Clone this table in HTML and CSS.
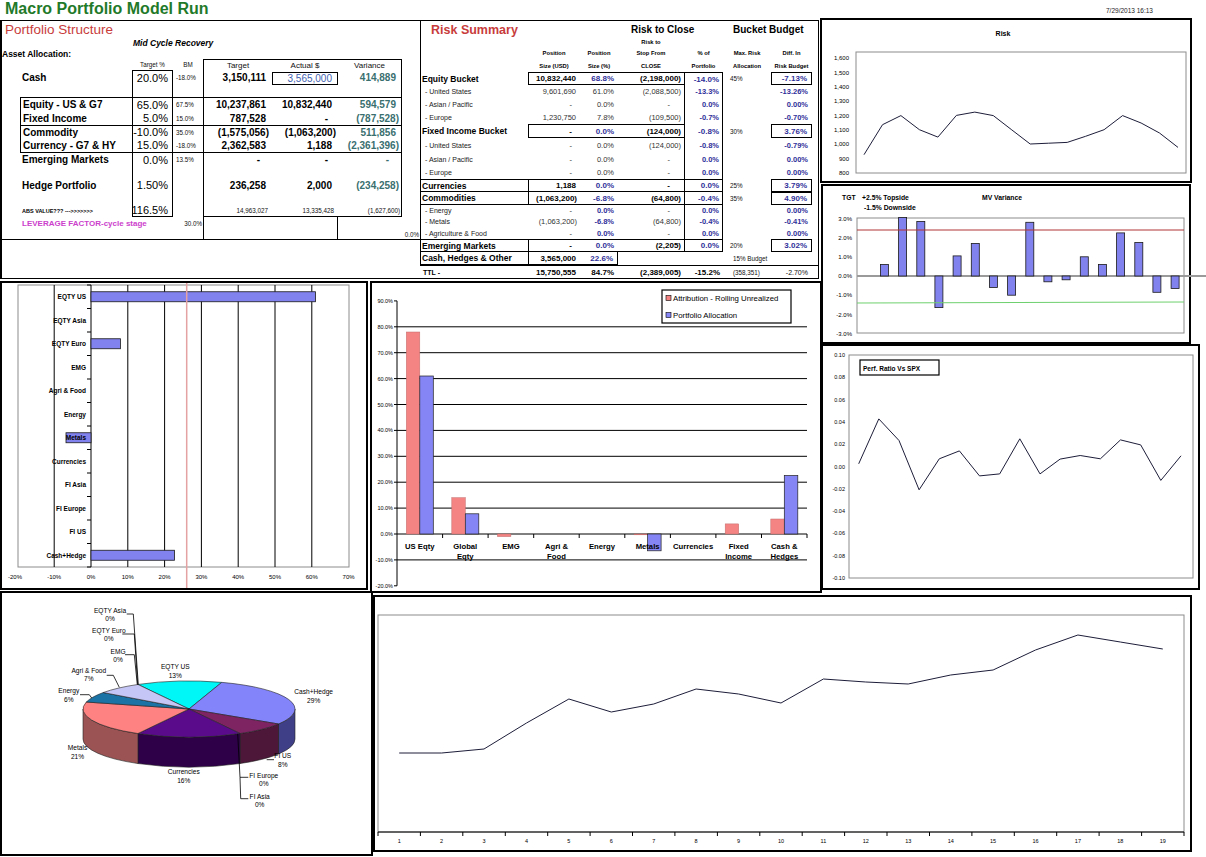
FILE: index.html
```html
<!DOCTYPE html>
<html>
<head>
<meta charset="utf-8">
<title>Macro Portfolio Model Run</title>
<link rel="stylesheet" href="styles.css">
</head>
<body>
<div class="page">
  <div class="header">
    <div class="title">Macro Portfolio Model Run</div>
    <div class="date">7/29/2013 16:13</div>
  </div>

  <div class="tables">
    <!-- Portfolio Structure -->
    <div class="ps">
      <div class="row h17"><div class="all ps-title">Portfolio Structure</div></div>
      <div class="row h10"><div></div><div></div><div class="span5 mid">Mid Cycle Recovery</div></div>
      <div class="row h11"><div class="all aa">Asset Allocation:</div></div>
      <div class="row h11">
        <div></div><div></div>
        <div class="c fx">Target %</div>
        <div class="c fx">BM</div>
        <div class="c hd bt bl">Target</div>
        <div class="c hd bt">Actual $</div>
        <div class="c hd bt br">Variance</div>
        <div></div>
      </div>
      <div class="row h14">
        <div></div>
        <div class="lab">Cash</div>
        <div class="r pct bt bl br pr4">20.0%</div>
        <div class="fx pl3">-18.0%</div>
        <div class="r num bl pr6">3,150,111</div>
        <div class="r cashbox pr5">3,565,000</div>
        <div class="r var br pr5">414,889</div>
        <div></div>
      </div>
      <div class="row h13">
        <div></div><div></div><div class="bl br"></div><div></div><div class="bl"></div><div></div><div class="br"></div><div></div>
      </div>
      <div class="row h14">
        <div></div>
        <div class="lab bt bl">Equity - US &amp; G7</div>
        <div class="r pct bt bl br pr4">65.0%</div>
        <div class="fx pl3 bt">67.5%</div>
        <div class="r num bt bl pr6">10,237,861</div>
        <div class="r num bt pr6">10,832,440</div>
        <div class="r var bt br pr5">594,579</div>
        <div></div>
      </div>
      <div class="row h14">
        <div></div>
        <div class="lab bl">Fixed Income</div>
        <div class="r pct bl br pr4">5.0%</div>
        <div class="fx pl3">15.0%</div>
        <div class="r num bl pr6">787,528</div>
        <div class="r num pr10">-</div>
        <div class="r var br pr2">(787,528)</div>
        <div></div>
      </div>
      <div class="row h13">
        <div></div>
        <div class="lab bt bl">Commodity</div>
        <div class="r pct bt bl br pr4">-10.0%</div>
        <div class="fx pl3 bt">35.0%</div>
        <div class="r num bt bl pr3">(1,575,056)</div>
        <div class="r num bt pr2">(1,063,200)</div>
        <div class="r var bt br pr5">511,856</div>
        <div></div>
      </div>
      <div class="row h15">
        <div></div>
        <div class="lab bb bl">Currency - G7 &amp; HY</div>
        <div class="r pct bb bl br pr4">15.0%</div>
        <div class="fx pl3 bb">-18.0%</div>
        <div class="r num bb bl pr6">2,362,583</div>
        <div class="r num bb pr6">1,188</div>
        <div class="r var bb br pr2">(2,361,396)</div>
        <div></div>
      </div>
      <div class="row h13">
        <div></div>
        <div class="lab">Emerging Markets</div>
        <div class="r pct bl br pr4">0.0%</div>
        <div class="fx pl3">13.5%</div>
        <div class="r num bl pr12">-</div>
        <div class="r num pr10">-</div>
        <div class="r var br pr12">-</div>
        <div></div>
      </div>
      <div class="row h12">
        <div></div><div></div><div class="bl br"></div><div></div><div class="bl"></div><div></div><div class="br"></div><div></div>
      </div>
      <div class="row h14">
        <div></div>
        <div class="lab">Hedge Portfolio</div>
        <div class="r pct bl br pr4">1.50%</div>
        <div></div>
        <div class="r num bl pr6">236,258</div>
        <div class="r num pr6">2,000</div>
        <div class="r var br pr2">(234,258)</div>
        <div></div>
      </div>
      <div class="row h12">
        <div></div><div></div><div class="bl br"></div><div></div><div class="bl"></div><div></div><div class="br"></div><div></div>
      </div>
      <div class="row h13">
        <div></div>
        <div class="fxb pl2">ABS VALUE??? ---&gt;&gt;&gt;&gt;&gt;&gt;&gt;</div>
        <div class="r pct bl br bb pr4">116.5%</div>
        <div></div>
        <div class="r fx bl bb pr4">14,963,027</div>
        <div class="r fx bb pr4">13,335,428</div>
        <div class="r fx br bb pr1">(1,627,600)</div>
        <div></div>
      </div>
      <div class="row h12">
        <div></div>
        <div class="span2 lev">LEVERAGE FACTOR-cycle stage</div>
        <div class="r fx pr1">30.0%</div>
        <div class="bl"></div>
        <div class="br"></div>
        <div></div>
        <div></div>
      </div>
      <div class="row h10">
        <div></div><div></div><div></div><div></div><div class="bl"></div><div class="br"></div><div></div>
        <div class="r fx pr1">0.0%</div>
      </div>
      <div class="row h40"><div class="all bt bb"></div></div>
    </div>

    <!-- Risk Summary -->
    <div class="rs">
      <div class="row h17 lb">
        <div class="rs-title">Risk Summary</div><div></div><div></div>
        <div class="span2 rtc">Risk to Close</div>
        <div class="span2 bbud">Bucket Budget</div>
        <div></div>
      </div>
      <div class="row h8 lb">
        <div></div><div></div><div></div><div class="c fh">Risk to</div><div></div><div></div><div></div><div></div>
      </div>
      <div class="row h13 lb">
        <div></div>
        <div class="c fh">Position</div>
        <div class="c fh">Position</div>
        <div class="c fh">Stop From</div>
        <div class="c fh">% of</div>
        <div class="c fh">Max. Risk</div>
        <div class="c fh">Diff. In</div>
        <div></div>
      </div>
      <div class="row h13 lb">
        <div></div>
        <div class="c fh">Size (USD)</div>
        <div class="c fh">Size (%)</div>
        <div class="c fh">CLOSE</div>
        <div class="c fh">Portfolio</div>
        <div class="c fh">Allocation</div>
        <div class="c fh">Risk Budget</div>
        <div></div>
      </div>
      <!-- Equity Bucket -->
      <div class="row h13 lb">
        <div class="fb pl2">Equity Bucket</div>
        <div class="r fn bt bb bl pr4">10,832,440</div>
        <div class="r fbb bt bb pr4">68.8%</div>
        <div class="r fn bt bb pr3">(2,198,000)</div>
        <div class="r fbb bt bl br pr3">-14.0%</div>
        <div class="fx pl7">45%</div>
        <div class="r fbb box pr4">-7.13%</div>
        <div></div>
      </div>
      <div class="row h13 lb">
        <div class="fs pl5">- United States</div>
        <div class="r fg pr4">9,601,690</div>
        <div class="r fg pr4">61.0%</div>
        <div class="r fg pr3">(2,088,500)</div>
        <div class="r fsb bl br pr3">-13.3%</div>
        <div></div>
        <div class="r fsb pr4">-13.26%</div>
        <div></div>
      </div>
      <div class="row h13 lb">
        <div class="fs pl5">- Asian / Pacific</div>
        <div class="r fg pr8">-</div>
        <div class="r fg pr4">0.0%</div>
        <div class="r fg pr14">-</div>
        <div class="r fsb bl br pr3">0.0%</div>
        <div></div>
        <div class="r fsb pr4">0.00%</div>
        <div></div>
      </div>
      <div class="row h13 lb">
        <div class="fs pl5">- Europe</div>
        <div class="r fg pr4">1,230,750</div>
        <div class="r fg pr4">7.8%</div>
        <div class="r fg pr3">(109,500)</div>
        <div class="r fsb bl br pr3">-0.7%</div>
        <div></div>
        <div class="r fsb pr4">-0.70%</div>
        <div></div>
      </div>
      <!-- Fixed Income Bucket -->
      <div class="row h14 lb">
        <div class="fb pl2">Fixed Income Bucket</div>
        <div class="r fn bt bb bl pr8">-</div>
        <div class="r fbb bt bb pr4">0.0%</div>
        <div class="r fn bt bb pr3">(124,000)</div>
        <div class="r fbb bl br pr3">-0.8%</div>
        <div class="fx pl7">30%</div>
        <div class="r fbb box pr4">3.76%</div>
        <div></div>
      </div>
      <div class="row h15 lb">
        <div class="fs pl5">- United States</div>
        <div class="r fg pr8">-</div>
        <div class="r fg pr4">0.0%</div>
        <div class="r fg pr3">(124,000)</div>
        <div class="r fsb bl br pr3">-0.8%</div>
        <div></div>
        <div class="r fsb pr4">-0.79%</div>
        <div></div>
      </div>
      <div class="row h13 lb">
        <div class="fs pl5">- Asian / Pacific</div>
        <div class="r fg pr8">-</div>
        <div class="r fg pr4">0.0%</div>
        <div class="r fg pr14">-</div>
        <div class="r fsb bl br pr3">0.0%</div>
        <div></div>
        <div class="r fsb pr4">0.00%</div>
        <div></div>
      </div>
      <div class="row h13 lb">
        <div class="fs pl5">- Europe</div>
        <div class="r fg pr8">-</div>
        <div class="r fg pr4">0.0%</div>
        <div class="r fg pr14">-</div>
        <div class="r fsb bl br pr3">0.0%</div>
        <div></div>
        <div class="r fsb pr4">0.00%</div>
        <div></div>
      </div>
      <!-- Currencies -->
      <div class="row h13 lb">
        <div class="fb pl2 bt bb">Currencies</div>
        <div class="r fn bt bb bl pr4">1,188</div>
        <div class="r fbb bt bb pr4">0.0%</div>
        <div class="r fn bt bb pr14">-</div>
        <div class="r fbb bt bb bl br pr3">0.0%</div>
        <div class="fx pl7">25%</div>
        <div class="r fbb box pr4">3.79%</div>
        <div></div>
      </div>
      <div class="row h13 lb">
        <div class="fb pl2 bb">Commodities</div>
        <div class="r fn bb bl pr3">(1,063,200)</div>
        <div class="r fbb bb pr4">-6.8%</div>
        <div class="r fn bb pr3">(64,800)</div>
        <div class="r fbb bb bl br pr3">-0.4%</div>
        <div class="fx pl7">35%</div>
        <div class="r fbb box pr4">4.90%</div>
        <div></div>
      </div>
      <div class="row h11 lb">
        <div class="fs pl5">- Energy</div>
        <div class="r fg pr8">-</div>
        <div class="r fsb pr4">0.0%</div>
        <div class="r fg pr14">-</div>
        <div class="r fsb bl br pr3">0.0%</div>
        <div></div>
        <div class="r fsb pr4">0.00%</div>
        <div></div>
      </div>
      <div class="row h11 lb">
        <div class="fs pl5">- Metals</div>
        <div class="r fg pr3">(1,063,200)</div>
        <div class="r fsb pr4">-6.8%</div>
        <div class="r fg pr3">(64,800)</div>
        <div class="r fsb bl br pr3">-0.4%</div>
        <div></div>
        <div class="r fsb pr4">-0.41%</div>
        <div></div>
      </div>
      <div class="row h12 lb">
        <div class="fs pl5">- Agriculture &amp; Food</div>
        <div class="r fg pr8">-</div>
        <div class="r fsb pr4">0.0%</div>
        <div class="r fg pr14">-</div>
        <div class="r fsb bl br pr3">0.0%</div>
        <div></div>
        <div class="r fsb pr4">0.00%</div>
        <div></div>
      </div>
      <!-- Emerging Markets -->
      <div class="row h13 lb">
        <div class="fb pl2 bt bb">Emerging Markets</div>
        <div class="r fn bt bb bl pr8">-</div>
        <div class="r fbb bt bb pr4">0.0%</div>
        <div class="r fn bt bb pr3">(2,205)</div>
        <div class="r fbb bt bb bl br pr3">0.0%</div>
        <div class="fx pl7">20%</div>
        <div class="r fbb box pr4">3.02%</div>
        <div></div>
      </div>
      <div class="row h13 lb">
        <div class="fb pl2 bb">Cash, Hedges &amp; Other</div>
        <div class="r fn bb bl pr4">3,565,000</div>
        <div class="r fbb bb br pr4">22.6%</div>
        <div></div>
        <div></div>
        <div class="span2 fx pl10">15% Budget</div>
        <div></div>
      </div>
      <div class="row h14 ttl">
        <div class="fttl pl3">TTL -</div>
        <div class="r fn pr4">15,750,555</div>
        <div class="r fn pr4">84.7%</div>
        <div class="r fn pr3">(2,389,005)</div>
        <div class="r fn pr3">-15.2%</div>
        <div class="fx pl10">(358,351)</div>
        <div class="r fx7 pr4">-2.70%</div>
        <div></div>
      </div>
    </div>
  </div>

  <!-- Risk line chart -->
  <div class="panel p-risk">
    <svg width="368" height="161" viewBox="2 2 368 161">
      <text x="183" y="17.5" class="s7 tb" text-anchor="middle">Risk</text>
      <rect x="36" y="34" width="330" height="121" class="pa"/>
      <g class="s6" text-anchor="end">
        <text x="29" y="42.2">1,600</text>
        <text x="29" y="56.6">1,500</text>
        <text x="29" y="70.9">1,400</text>
        <text x="29" y="85.3">1,300</text>
        <text x="29" y="99.7">1,200</text>
        <text x="29" y="114.1">1,100</text>
        <text x="29" y="128.4">1,000</text>
        <text x="29" y="142.8">900</text>
        <text x="29" y="157.2">800</text>
      </g>
      <polyline class="ln" points="44,136.7 62.5,106.7 80.9,97.6 99.4,111.7 117.9,119.1 136.4,97.4 154.8,94.1 173.3,97.6 191.8,111.9 210.2,126 228.7,125.2 247.2,124.4 265.6,118.3 284.1,111.7 302.6,97.6 321.1,105 339.5,115 358,129.4"/>
    </svg>
  </div>

  <!-- MV Variance -->
  <div class="panel p-mv">
    <svg width="366" height="156" viewBox="2 2 366 156">
      <g class="s68 tb">
        <text x="21" y="15.5">TGT</text>
        <text x="41" y="15.5">+2.5% Topside</text>
        <text x="43" y="25.5">-1.5% Downside</text>
        <text x="161" y="15.5">MV Variance</text>
      </g>
      <rect x="36" y="34" width="327" height="115" class="pa"/>
      <g class="s6" text-anchor="end">
        <text x="31" y="36.7">3.0%</text>
        <text x="31" y="55.9">2.0%</text>
        <text x="31" y="75">1.0%</text>
        <text x="31" y="94.2">0.0%</text>
        <text x="31" y="113.4">-1.0%</text>
        <text x="31" y="132.5">-2.0%</text>
        <text x="31" y="151.7">-3.0%</text>
      </g>
      <line x1="36" y1="92" x2="387" y2="92" class="zero"/>
      <g class="bar">
        <rect x="59.4" y="80.5" width="8" height="11.5"/>
        <rect x="77.6" y="33.5" width="8" height="58.5"/>
        <rect x="95.8" y="37.4" width="8" height="54.6"/>
        <rect x="113.9" y="92" width="8" height="31.6"/>
        <rect x="132.1" y="71.9" width="8" height="20.1"/>
        <rect x="150.3" y="59.4" width="8" height="32.6"/>
        <rect x="168.4" y="92" width="8" height="11.5"/>
        <rect x="186.6" y="92" width="8" height="19.2"/>
        <rect x="204.8" y="38.3" width="8" height="53.7"/>
        <rect x="222.9" y="92" width="8" height="5.8"/>
        <rect x="241.1" y="92" width="8" height="3.8"/>
        <rect x="259.3" y="72.8" width="8" height="19.2"/>
        <rect x="277.4" y="80.5" width="8" height="11.5"/>
        <rect x="295.6" y="48.9" width="8" height="43.1"/>
        <rect x="313.8" y="58.5" width="8" height="33.5"/>
        <rect x="331.9" y="92" width="8" height="16.3"/>
        <rect x="350.1" y="92" width="8" height="12.5"/>
      </g>
      <line x1="36" y1="46" x2="363" y2="46" class="redl"/>
      <line x1="36" y1="119" x2="363" y2="118" class="grnl"/>
    </svg>
  </div>

  <!-- Perf Ratio -->
  <div class="panel p-perf">
    <svg width="375" height="242" viewBox="2 2 375 242">
      <rect x="28" y="11" width="344" height="223" class="pa"/>
      <g class="s55" text-anchor="end">
        <text x="24" y="13">0.10</text>
        <text x="24" y="35.3">0.08</text>
        <text x="24" y="57.6">0.06</text>
        <text x="24" y="79.9">0.04</text>
        <text x="24" y="102.2">0.02</text>
        <text x="24" y="124.5">0.00</text>
        <text x="24" y="146.8">-0.02</text>
        <text x="24" y="169.1">-0.04</text>
        <text x="24" y="191.4">-0.06</text>
        <text x="24" y="213.7">-0.08</text>
        <text x="24" y="236">-0.10</text>
      </g>
      <rect x="39" y="16" width="79" height="15" class="lgbox"/>
      <text x="42" y="26.5" class="s65 tb">Perf. Ratio Vs SPX</text>
      <polyline class="ln" points="37.7,119.8 57.8,74.9 78,96.5 98.1,145.8 118.3,114.8 138.4,106.9 158.5,131.9 178.7,129.9 198.8,94.8 219,129.9 239.1,115.1 259.2,111.5 279.4,114.8 299.5,95.9 319.7,100.9 339.8,136.4 360,111.8"/>
    </svg>
  </div>

  <!-- Horizontal bar chart -->
  <div class="panel p-hbar">
    <svg width="364" height="305" viewBox="2 2 364 305">
      <rect x="18" y="4" width="331" height="282" class="pa"/>
      <path class="gl" d="M54.2 4V286M91 4V286M127.8 4V286M164.6 4V286M201.4 4V286M238.2 4V286M275 4V286M311.8 4V286"/>
      <path class="gl" d="M87 4h4M87 27.5h4M87 51h4M87 74.5h4M87 98h4M87 121.5h4M87 145h4M87 168.5h4M87 192h4M87 215.5h4M87 239h4M87 262.5h4M87 286h4"/>
      <g class="bar">
        <rect x="91" y="10.75" width="224.5" height="10"/>
        <rect x="91" y="57.75" width="29.4" height="10"/>
        <rect x="66" y="151.75" width="25" height="10"/>
        <rect x="91" y="269.25" width="83.5" height="10"/>
      </g>
      <g class="s65 tb" text-anchor="end">
        <text x="86" y="18">EQTY US</text>
        <text x="86" y="41.5">EQTY Asia</text>
        <text x="86" y="65">EQTY Euro</text>
        <text x="86" y="88.5">EMG</text>
        <text x="86" y="112">Agri &amp; Food</text>
        <text x="86" y="135.5">Energy</text>
        <text x="86" y="159">Metals</text>
        <text x="86" y="182.5">Currencies</text>
        <text x="86" y="206">FI Asia</text>
        <text x="86" y="229.5">FI Europe</text>
        <text x="86" y="253">FI US</text>
        <text x="86" y="276.5">Cash+Hedge</text>
      </g>
      <line x1="186.7" y1="2" x2="186.7" y2="307" class="pink"/>
      <g class="s6" text-anchor="middle">
        <text x="15" y="298">-20%</text>
        <text x="54.2" y="298">-10%</text>
        <text x="91" y="298">0%</text>
        <text x="127.8" y="298">10%</text>
        <text x="164.6" y="298">20%</text>
        <text x="201.4" y="298">30%</text>
        <text x="238.2" y="298">40%</text>
        <text x="275" y="298">50%</text>
        <text x="311.8" y="298">60%</text>
        <text x="348.6" y="298">70%</text>
      </g>
    </svg>
  </div>

  <!-- Column chart -->
  <div class="panel p-col">
    <svg width="448" height="308" viewBox="2 2 448 308">
      <path class="gl" d="M27 45.8H437M27 71.7H437M27 97.6H437M27 123.5H437M27 149.4H437M27 175.3H437M27 201.2H437M27 227.1H437M27 253H437M27 278.9H437"/>
      <path class="gl" d="M27 19.9V304.8M24 19.9h3M24 45.8h3M24 71.7h3M24 97.6h3M24 123.5h3M24 149.4h3M24 175.3h3M24 201.2h3M24 227.1h3M24 253h3M24 278.9h3M24 304.8h3"/>
      <path class="gl" d="M72.6 253v4M118.1 253v4M163.7 253v4M209.2 253v4M254.8 253v4M300.4 253v4M345.9 253v4M391.5 253v4M437 253v4"/>
      <g class="s55" text-anchor="end">
        <text x="23" y="21.9">90.0%</text>
        <text x="23" y="47.8">80.0%</text>
        <text x="23" y="73.7">70.0%</text>
        <text x="23" y="99.6">60.0%</text>
        <text x="23" y="125.5">50.0%</text>
        <text x="23" y="151.4">40.0%</text>
        <text x="23" y="177.3">30.0%</text>
        <text x="23" y="203.2">20.0%</text>
        <text x="23" y="229.1">10.0%</text>
        <text x="23" y="255">0.0%</text>
        <text x="23" y="280.9">-10.0%</text>
        <text x="23" y="306.8">-20.0%</text>
      </g>
      <g class="rbar">
        <rect x="36.3" y="51" width="13.5" height="202"/>
        <rect x="81.8" y="216.7" width="13.5" height="36.3"/>
        <rect x="127.4" y="253" width="13.5" height="2.6"/>
        <rect x="264.1" y="253" width="13.5" height="0.8"/>
        <rect x="355.2" y="242.9" width="13.5" height="10.1"/>
        <rect x="400.8" y="238" width="13.5" height="15"/>
      </g>
      <g class="bbar">
        <rect x="49.8" y="95" width="13.5" height="158"/>
        <rect x="95.3" y="232.8" width="13.5" height="20.2"/>
        <rect x="277.6" y="253" width="13.5" height="16.8"/>
        <rect x="414.3" y="194.5" width="13.5" height="58.5"/>
      </g>
      <g class="s77 tb" text-anchor="middle">
        <text x="49.8" y="267.7">US Eqty</text>
        <text x="95.3" y="267.7">Global</text>
        <text x="95.3" y="277.7">Eqty</text>
        <text x="140.9" y="267.7">EMG</text>
        <text x="186.5" y="267.7">Agri &amp;</text>
        <text x="186.5" y="277.7">Food</text>
        <text x="232" y="267.7">Energy</text>
        <text x="277.6" y="267.7">Metals</text>
        <text x="323.1" y="267.7">Currencies</text>
        <text x="368.7" y="267.7">Fixed</text>
        <text x="368.7" y="277.7">Income</text>
        <text x="414.3" y="267.7">Cash &amp;</text>
        <text x="414.3" y="277.7">Hedges</text>
      </g>
      <rect x="292" y="9" width="129" height="33" class="lgbox"/>
      <rect x="296" y="14.5" width="5" height="5" class="rsq"/>
      <text x="303" y="20" class="s78">Attribution - Rolling Unrealized</text>
      <rect x="296" y="31.5" width="5" height="5" class="bsq"/>
      <text x="303" y="37" class="s78">Portfolio Allocation</text>
    </svg>
  </div>

  <!-- 3D Pie -->
  <div class="panel p-pie">
    <svg width="369" height="261" viewBox="2 2 369 261">
      <g class="pe">
        <path fill="#3f3f88" d="M295 118A106 28 0 0 1 278.5 133L278.5 163A106 28 0 0 0 295 148Z"/>
        <path fill="#4c1738" d="M278.5 133A106 28 0 0 1 240.07 142.54L240.07 172.54A106 28 0 0 0 278.5 163Z"/>
        <path fill="#2d0048" d="M240.07 142.54A106 28 0 0 1 137.93 142.54L137.93 172.54A106 28 0 0 0 240.07 172.54Z"/>
        <path fill="#9b5353" d="M137.93 142.54A106 28 0 0 1 83 118L83 148A106 28 0 0 0 137.93 172.54Z"/>
        <path fill="#00f7f7" d="M189 118L137.93 93.46A106 28 0 0 1 221.76 91.37Z"/>
        <path fill="#8484fa" d="M189 118L221.76 91.37A106 28 0 0 1 278.5 133Z"/>
        <path fill="#7e2463" d="M189 118L278.5 133A106 28 0 0 1 240.07 142.54Z"/>
        <path fill="#5a0b8c" d="M189 118L240.07 142.54A106 28 0 0 1 137.93 142.54Z"/>
        <path fill="#ff8282" d="M189 118L137.93 142.54A106 28 0 0 1 86.33 111.04Z"/>
        <path fill="#1b72a5" d="M189 118L86.33 111.04A106 28 0 0 1 103.24 101.54Z"/>
        <path fill="#c6c6f6" d="M189 118L103.24 101.54A106 28 0 0 1 137.93 93.46Z"/>
      </g>
      <path class="lead" d="M126.7 23H133.3L138.3 93.7M122.3 43H134.3L137.7 93.7M125 63.7H134.3L137.3 93.7M106.7 84.3H113.3L119.3 96.3M80 103.7H89.3L91.7 107M266.7 168.7H274M237.7 142.7L240 186.3H248.3M240 186.3L240.7 207.7H248.3"/>
      <g class="s66" text-anchor="middle">
        <text x="110" y="21.9">EQTY Asia</text><text x="110" y="29.9">0%</text>
        <text x="108.8" y="41.9">EQTY Euro</text><text x="108.8" y="49.9">0%</text>
        <text x="118" y="62.5">EMG</text><text x="118" y="70.5">0%</text>
        <text x="88.8" y="81.9">Agri &amp; Food</text><text x="88.8" y="90.2">7%</text>
        <text x="68.8" y="101.9">Energy</text><text x="68.8" y="110.9">6%</text>
        <text x="175.3" y="78.2">EQTY US</text><text x="175.3" y="86.5">13%</text>
        <text x="313.7" y="102.9">Cash+Hedge</text><text x="313.7" y="111.5">29%</text>
        <text x="77.5" y="159.2">Metals</text><text x="77.5" y="167.5">21%</text>
        <text x="183.8" y="182.5">Currencies</text><text x="183.8" y="191.5">16%</text>
        <text x="282.8" y="166.9">FI US</text><text x="282.8" y="175.9">8%</text>
        <text x="263.8" y="186.9">FI Europe</text><text x="263.8" y="195.2">0%</text>
        <text x="259.7" y="207.5">FI Asia</text><text x="259.7" y="215.9">0%</text>
      </g>
    </svg>
  </div>

  <!-- Bottom line chart -->
  <div class="panel p-line">
    <svg width="815" height="253" viewBox="2 2 815 253">
      <rect x="5" y="20" width="806" height="217" class="pa"/>
      <path class="gl" d="M5 237H811M5 237v4M47.4 237v4M89.8 237v4M132.3 237v4M174.7 237v4M217.1 237v4M259.5 237v4M301.9 237v4M344.4 237v4M386.8 237v4M429.2 237v4M471.6 237v4M514 237v4M556.5 237v4M598.9 237v4M641.3 237v4M683.7 237v4M726.1 237v4M768.6 237v4M811 237v4"/>
      <g class="s55" text-anchor="middle">
        <text x="26.2" y="247.5">1</text>
        <text x="68.6" y="247.5">2</text>
        <text x="111" y="247.5">3</text>
        <text x="153.5" y="247.5">4</text>
        <text x="195.9" y="247.5">5</text>
        <text x="238.3" y="247.5">6</text>
        <text x="280.7" y="247.5">7</text>
        <text x="323.1" y="247.5">8</text>
        <text x="365.6" y="247.5">9</text>
        <text x="408" y="247.5">10</text>
        <text x="450.4" y="247.5">11</text>
        <text x="492.8" y="247.5">12</text>
        <text x="535.2" y="247.5">13</text>
        <text x="577.7" y="247.5">14</text>
        <text x="620.1" y="247.5">15</text>
        <text x="662.5" y="247.5">16</text>
        <text x="704.9" y="247.5">17</text>
        <text x="747.3" y="247.5">18</text>
        <text x="789.8" y="247.5">19</text>
      </g>
      <polyline class="ln" points="26.2,158 68.6,158 111,154 153.5,128 195.9,104 238.3,117 280.7,109 323.1,94 365.6,99 408,108 450.4,84 492.8,87 535.2,89 577.7,80 620.1,75 662.5,55 704.9,40 747.3,47 789.8,54"/>
    </svg>
  </div>
</div>
</body>
</html>
```
FILE: styles.css
```css
* { box-sizing: border-box; }
body {
  margin: 0;
  background: #fff;
  color: #000;
  font-family: "Liberation Sans", Arial, sans-serif;
}
.page {
  display: grid;
  grid-template-columns: 370px 450px 386px;
  grid-template-rows: 18px 165px 96px 65px 247px 266px;
  width: 1206px;
  height: 857px;
  overflow: hidden;
}
.header {
  grid-column: 1 / 4;
  grid-row: 1;
  display: flex;
  justify-content: space-between;
  align-items: flex-start;
}
.title {
  font-size: 16px;
  font-weight: bold;
  color: #1f7a2a;
  line-height: 18px;
  padding-left: 5px;
}
.date {
  font-size: 6.5px;
  color: #222;
  padding: 7px 53px 0 0;
}

/* ---------- tables ---------- */
.tables {
  grid-column: 1 / 3;
  grid-row: 2 / 4;
  display: flex;
  align-items: flex-start;
  margin-top: 2px;
}
.ps {
  width: 420px;
  border-left: 2px solid #000;
  border-top: 1px solid #000;
}
.rs {
  width: 399px;
  border-top: 1px solid #000;
  border-right: 1px solid #000;
}
.row { display: grid; }
.ps .row { grid-template-columns: 18px 112px 41px 30px 69px 66px 64px 18px; }
.rs .row { grid-template-columns: 108px 52px 38px 66px 39px 48px 41px 6px; }
.row > div {
  display: flex;
  align-items: center;
  white-space: nowrap;
  min-width: 0;
}
.rs .row.lb { box-shadow: inset 1px 0 0 #000; }
.rs .row.ttl { box-shadow: inset 0 1px 0 #000, inset 0 -1px 0 #000; }

.h8 { height: 8px; } .h10 { height: 10px; } .h11 { height: 11px; }
.h12 { height: 12px; } .h13 { height: 13px; } .h14 { height: 14px; }
.h15 { height: 15px; } .h17 { height: 17px; } .h40 { height: 40px; }

.all { grid-column: 1 / -1; }
.span2 { grid-column: span 2; }
.span5 { grid-column: span 5; }

.r { justify-content: flex-end; }
.c { justify-content: center; }

.bt { border-top: 1px solid #000; }
.bb { border-bottom: 1px solid #000; }
.bl { border-left: 1px solid #000; }
.br { border-right: 1px solid #000; }
.box { border: 1px solid #000; }

.pr1 { padding-right: 1px; } .pr2 { padding-right: 2px; } .pr3 { padding-right: 3px; }
.pr4 { padding-right: 4px; } .pr5 { padding-right: 5px; } .pr6 { padding-right: 6px; }
.pr8 { padding-right: 8px; } .pr10 { padding-right: 10px; } .pr12 { padding-right: 12px; }
.pr14 { padding-right: 14px; }
.pl2 { padding-left: 2px; } .pl3 { padding-left: 3px; } .pl5 { padding-left: 5px; }
.pl7 { padding-left: 7px; } .pl10 { padding-left: 10px; }

/* portfolio structure text */
.ps-title {
  font-size: 13.5px;
  color: #c83c3c;
  padding-left: 3px;
}
.mid {
  font-size: 8.5px;
  font-weight: bold;
  font-style: italic;
  padding-left: 1px;
}
.aa { font-size: 8.5px; font-weight: bold; }
.hd { font-size: 8px; color: #111; }
.lab { font-size: 10px; font-weight: bold; padding-left: 2px; }
.pct { font-size: 11px; }
.fx { font-size: 6.3px; color: #111; }
.fx7 { font-size: 7px; color: #111; }
.fxb { font-size: 5.5px; font-weight: bold; }
.num { font-size: 10px; font-weight: bold; }
.var { font-size: 10px; font-weight: bold; color: #3a6f6f; }
.cashbox {
  border: 1px solid #000;
  margin-top: 2px;
  font-size: 10px;
  color: #3f5fb0;
}
.lev {
  font-size: 8px;
  font-weight: bold;
  color: #cc3fcc;
  padding-left: 2px;
}

/* risk summary text */
.rs-title {
  font-size: 12.5px;
  font-weight: bold;
  color: #c83c3c;
  padding-left: 11px;
}
.rtc { font-size: 10px; font-weight: bold; padding-left: 13px; }
.bbud { font-size: 10px; font-weight: bold; padding-left: 10px; }
.fh { font-size: 5.8px; font-weight: bold; }
.fb { font-size: 8.5px; font-weight: bold; }
.fn { font-size: 8px; font-weight: bold; }
.fbb { font-size: 8px; font-weight: bold; color: #30309a; }
.fs { font-size: 7px; color: #222; }
.fg { font-size: 7.5px; color: #333; }
.fsb { font-size: 7.5px; font-weight: bold; color: #30309a; }
.fttl { font-size: 7px; font-weight: bold; }

/* ---------- chart panels ---------- */
.panel {
  border: 2px solid #000;
  background: #fff;
  align-self: start;
  justify-self: start;
}
.panel svg { display: block; overflow: visible; }
.p-risk { grid-column: 3; grid-row: 2; width: 372px; height: 165px; }
.p-mv { grid-column: 3; grid-row: 3 / 5; width: 370px; height: 160px; margin: 1px 0 0 1px; }
.p-perf { grid-column: 3; grid-row: 5; width: 379px; height: 246px; margin-left: 1px; }
.p-hbar { grid-column: 1; grid-row: 4 / 6; width: 368px; height: 309px; margin-top: 2px; }
.p-col { grid-column: 2; grid-row: 4 / 6; width: 452px; height: 312px; margin-top: 2px; }
.p-pie { grid-column: 1; grid-row: 6; width: 373px; height: 265px; }
.p-line { grid-column: 2 / 4; grid-row: 6; width: 819px; height: 257px; margin: 4px 0 0 3px; }

svg text { font-family: "Liberation Sans", Arial, sans-serif; fill: #000; }
.s55 { font-size: 5.5px; }
.s6 { font-size: 6px; }
.s65 { font-size: 6.5px; }
.s66 { font-size: 6.6px; }
.s68 { font-size: 6.8px; }
.s7 { font-size: 7px; }
.s77 { font-size: 7.7px; }
.s78 { font-size: 7.8px; }
.tb { font-weight: bold; }

.pa { fill: none; stroke: #8c8c8c; stroke-width: 1; }
.ln { fill: none; stroke: #1d1d3a; stroke-width: 1; }
.gl { fill: none; stroke: #000; stroke-width: 1; }
.zero { stroke: #9a9a9a; stroke-width: 2; }
.redl { stroke: #b03434; stroke-width: 1; }
.grnl { stroke: #6fd06f; stroke-width: 1.2; }
.pink { stroke: #e4a2a2; stroke-width: 1.5; }
.bar rect { fill: #8282ee; stroke: #1a1a1a; stroke-width: 0.8; }
.rbar rect { fill: #f48484; stroke: #c06a6a; stroke-width: 0.5; }
.bbar rect { fill: #8585f5; stroke: #222; stroke-width: 0.7; }
.lgbox { fill: #fff; stroke: #000; stroke-width: 1.2; }
.rsq { fill: #f48484; stroke: #000; stroke-width: 0.6; }
.bsq { fill: #8585f5; stroke: #000; stroke-width: 0.6; }
.pe path { stroke: #222; stroke-width: 0.6; }
.lead { fill: none; stroke: #000; stroke-width: 0.8; }
```
